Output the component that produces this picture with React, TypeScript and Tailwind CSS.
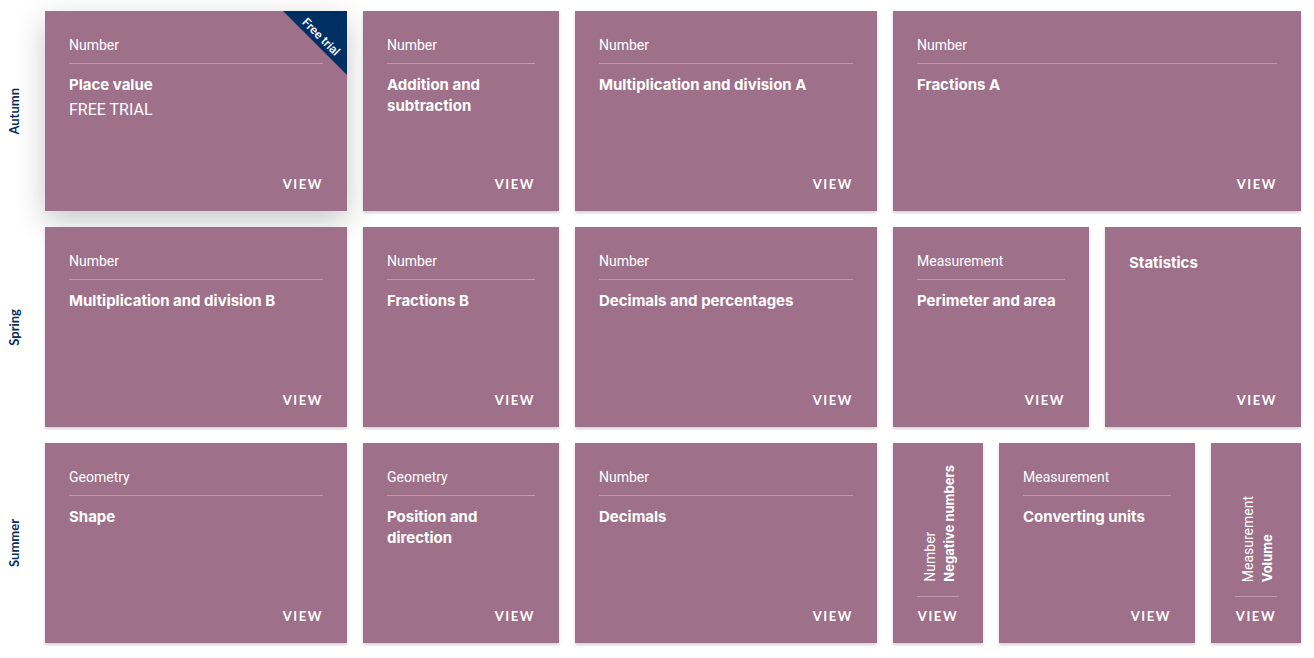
import React from "react";

type Card = {
  span: number;
  cat?: string;
  title: string;
  extra?: string;
  narrow?: boolean;
  trial?: boolean;
};

const rows: { season: string; cards: Card[] }[] = [
  {
    season: "Autumn",
    cards: [
      { span: 3, cat: "Number", title: "Place value", extra: "FREE TRIAL", trial: true },
      { span: 2, cat: "Number", title: "Addition and subtraction" },
      { span: 3, cat: "Number", title: "Multiplication and division A" },
      { span: 4, cat: "Number", title: "Fractions A" },
    ],
  },
  {
    season: "Spring",
    cards: [
      { span: 3, cat: "Number", title: "Multiplication and division B" },
      { span: 2, cat: "Number", title: "Fractions B" },
      { span: 3, cat: "Number", title: "Decimals and percentages" },
      { span: 2, cat: "Measurement", title: "Perimeter and area" },
      { span: 2, title: "Statistics" },
    ],
  },
  {
    season: "Summer",
    cards: [
      { span: 3, cat: "Geometry", title: "Shape" },
      { span: 2, cat: "Geometry", title: "Position and direction" },
      { span: 3, cat: "Number", title: "Decimals" },
      { span: 1, cat: "Number", title: "Negative numbers", narrow: true },
      { span: 2, cat: "Measurement", title: "Converting units" },
      { span: 1, cat: "Measurement", title: "Volume", narrow: true },
    ],
  },
];

const spanClass: Record<number, string> = {
  1: "col-span-1",
  2: "col-span-2",
  3: "col-span-3",
  4: "col-span-4",
};

const bodyFont = { fontFamily: "Roboto, 'Liberation Sans', sans-serif" };
const headFont = { fontFamily: "Inter, 'Liberation Sans', sans-serif" };
const viewFont = { fontFamily: "Lato, 'Liberation Sans', sans-serif" };

function View() {
  return (
    <div
      className="text-[13px] leading-5 font-bold tracking-[0.12em] text-white"
      style={viewFont}
    >
      VIEW
    </div>
  );
}

function CardBox({ c }: { c: Card }) {
  const shadow = c.trial
    ? "shadow-[0_10px_28px_rgba(0,0,0,0.22)]"
    : "shadow-[0_2px_3px_rgba(0,0,0,0.18)]";
  if (c.narrow) {
    return (
      <div
        className={`${spanClass[c.span]} ${shadow} relative flex h-[200px] flex-col bg-[#9e7089] px-6 pb-[17px] text-white`}
      >
        <div className="flex flex-1 flex-col justify-end pb-[14px]">
          <div className="flex rotate-180 flex-col items-start justify-end [writing-mode:vertical-rl]">
            <span className="text-[14px] leading-[19px]" style={bodyFont}>
              {c.cat}
            </span>
            <span className="text-[13px] font-bold leading-[19px]" style={headFont}>
              {c.title}
            </span>
          </div>
        </div>
        <div className="h-px bg-white/30" />
        <div className="mt-[9px] flex justify-center">
          <View />
        </div>
      </div>
    );
  }
  return (
    <div
      className={`${spanClass[c.span]} ${shadow} relative flex h-[200px] flex-col overflow-hidden bg-[#9e7089] px-6 pt-6 pb-[17px] text-white`}
    >
      {c.trial && (
        <>
          <div className="absolute top-0 right-0 h-16 w-16 bg-[#002f63] [clip-path:polygon(0_0,100%_0,100%_100%)]" />
          <div
            className="absolute top-[18px] right-[-14px] h-4 w-20 rotate-45 text-center text-[12px] font-medium leading-4 text-white"
            style={bodyFont}
          >
            Free trial
          </div>
        </>
      )}
      <div className="flex-1">
        {c.cat ? (
          <>
            <div className="text-[14px] leading-5" style={bodyFont}>
              {c.cat}
            </div>
            <div className="mt-2 h-px bg-white/30" />
            <div className="mt-[10px] text-[15px] font-bold leading-[21px]" style={headFont}>
              {c.title}
            </div>
          </>
        ) : (
          <div className="mt-[1px] text-[15px] font-bold leading-[21px]" style={headFont}>
            {c.title}
          </div>
        )}
        {c.extra && (
          <div className="mt-[4px] text-[16px] leading-[21px]" style={bodyFont}>
            {c.extra}
          </div>
        )}
      </div>
      <div className="flex justify-end">
        <View />
      </div>
    </div>
  );
}

export default function App() {
  return (
    <div className="min-h-[658px] w-[1314px] bg-white pt-[11px]">
      <div className="flex flex-col gap-4">
        {rows.map((r) => (
          <div key={r.season} className="flex">
            <div className="flex w-[45px] items-center pl-[6px]">
              <span
                className="rotate-180 text-[13px] font-bold leading-4 text-[#0b2d5f] [writing-mode:vertical-rl]"
                style={viewFont}
              >
                {r.season}
              </span>
            </div>
            <div className="grid grid-cols-[repeat(12,90px)] gap-4">
              {r.cards.map((c) => (
                <CardBox key={c.title} c={c} />
              ))}
            </div>
          </div>
        ))}
      </div>
    </div>
  );
}
